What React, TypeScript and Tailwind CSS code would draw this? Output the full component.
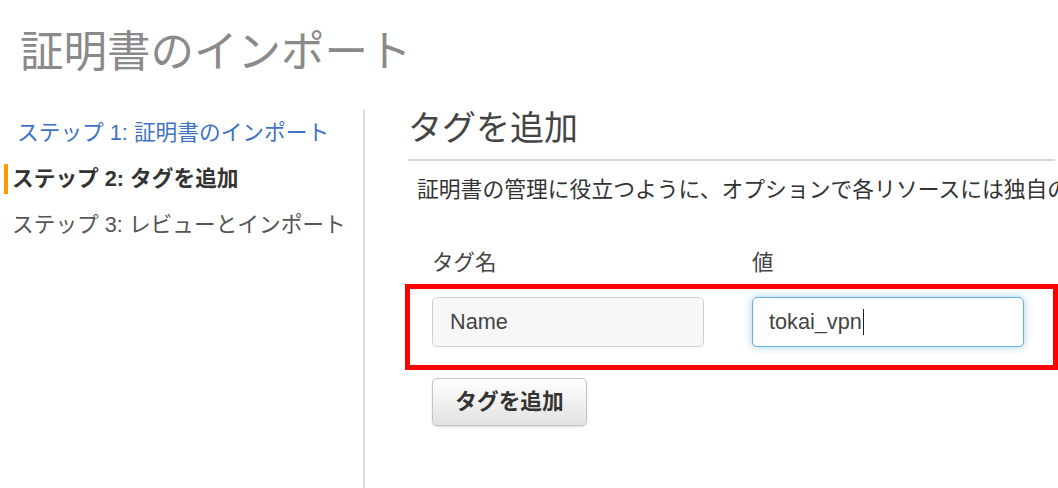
const font = { fontFamily: '"Liberation Sans", "Noto Sans CJK JP", sans-serif' };

const steps = [
  { id: 1, label: "ステップ 1: 証明書のインポート", state: "done" as const },
  { id: 2, label: "ステップ 2: タグを追加", state: "current" as const },
  { id: 3, label: "ステップ 3: レビューとインポート", state: "todo" as const },
];

const App = () => {
  return (
    <div
      className="w-[1058px] h-[488px] overflow-hidden bg-white"
      style={font}
    >
      <h1 className="pl-[20px] pt-[30px] text-[43.5px] leading-[44px] font-normal text-[#8a8a8a] whitespace-nowrap">
        証明書のインポート
      </h1>

      <div className="flex mt-[36px] h-[378px]">
        {/* wizard steps */}
        <nav className="w-[363px] shrink-0 text-[21.7px]">
          {steps.map((step) =>
            step.state === "current" ? (
              <div key={step.id} className="h-[46px] flex items-center">
                <div className="ml-[4px] border-l-[4px] border-[#ff9900] pl-[4px] leading-[30px] font-bold text-[#333] whitespace-nowrap">
                  {step.label}
                </div>
              </div>
            ) : (
              <div
                key={step.id}
                className={
                  step.state === "done"
                    ? "h-[46px] flex items-center pl-[17px] text-[#3d72c6] whitespace-nowrap"
                    : "h-[46px] flex items-center pl-[12px] text-[#555] whitespace-nowrap"
                }
              >
                {step.label}
              </div>
            )
          )}
        </nav>

        <div className="w-[2px] shrink-0 bg-[#dcdcdc]" />

        <main className="flex-1 min-w-0 overflow-hidden pl-[43px] pr-[3px]">
          <h2 className="mt-[1px] pb-[14px] border-b-2 border-[#d8d8d8] text-[34px] leading-[34px] font-normal text-[#444] whitespace-nowrap">
            タグを追加
          </h2>

          <p className="mt-[18px] pl-[9px] text-[21.8px] leading-[22px] text-[#333] whitespace-nowrap">
            証明書の管理に役立つように、オプションで各リソースには独自の
          </p>

          <div className="mt-[51px] ml-[24px] flex gap-[48px] text-[21.5px] leading-[22px] text-[#444]">
            <div className="w-[272px] shrink-0">タグ名</div>
            <div className="w-[272px] shrink-0">値</div>
          </div>

          <div className="relative mt-[23px] ml-[24px] flex gap-[48px] text-[21.7px] text-[#444]">
            <div className="w-[272px] h-[50px] shrink-0 flex items-center pl-[17px] rounded-[5px] border-[1.5px] border-[#cfcfcf] bg-[#f7f7f7]">
              Name
            </div>
            <div className="w-[272px] h-[50px] shrink-0 flex items-center pl-[16px] rounded-[5px] border-[1.5px] border-[#66afe9] bg-white shadow-[0_0_8px_rgba(102,175,233,0.6)]">
              tokai_vpn
              <span className="ml-[1px] w-[1.5px] h-[26px] bg-[#222]" />
            </div>
            <div className="absolute left-[-27px] top-[-13px] w-[653px] h-[86px] border-[5px] border-[#ff0000]" />
          </div>

          <button className="mt-[31px] ml-[24px] w-[155px] h-[48px] rounded-[5px] border-[1.5px] border-[#c4c4c4] bg-gradient-to-b from-white to-[#e2e2e2] shadow-[0_1px_2px_rgba(0,0,0,0.15)] text-[21.7px] font-bold text-[#333]">
            タグを追加
          </button>
        </main>
      </div>
    </div>
  );
};

export default App;
